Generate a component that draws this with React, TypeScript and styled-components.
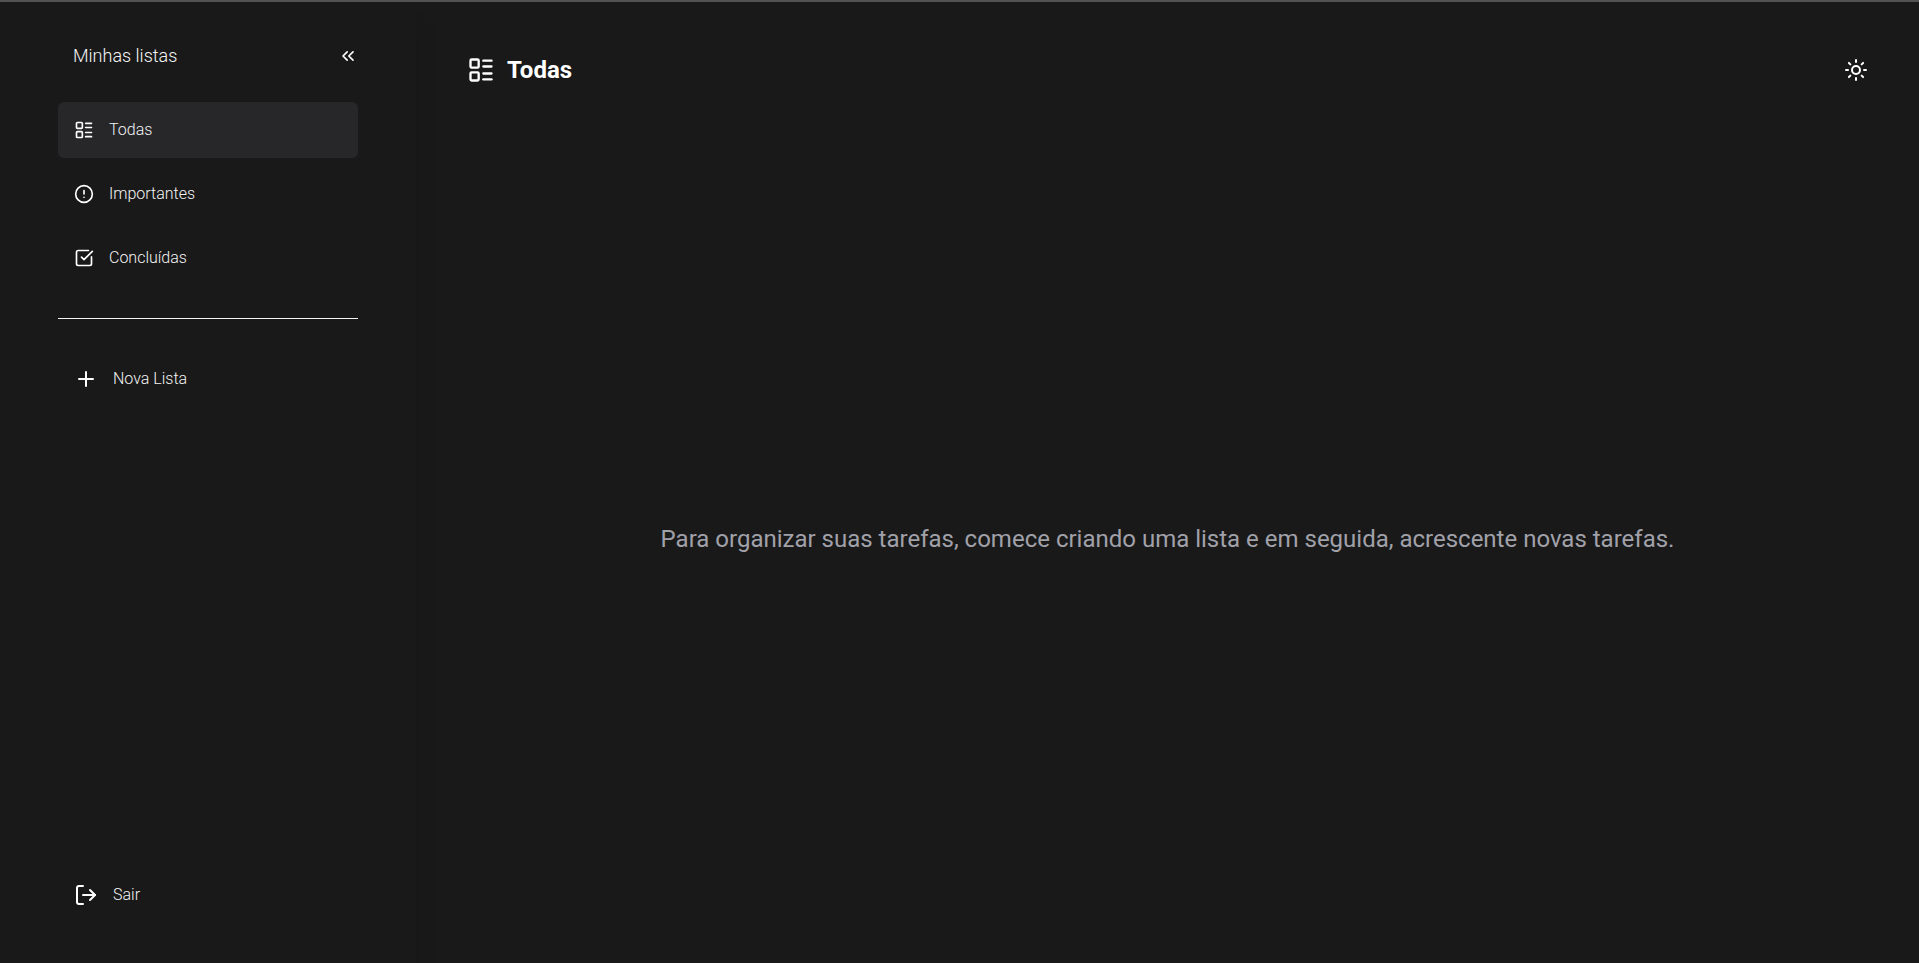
import React, { useState } from "react";
import styled, { createGlobalStyle } from "styled-components";
import {
  ChevronsLeft,
  CircleAlert,
  LayoutList,
  LogOut,
  Plus,
  SquareCheckBig,
  Sun,
} from "lucide-react";

const GlobalStyle = createGlobalStyle`
  *, *::before, *::after { box-sizing: border-box; }
  body {
    margin: 0;
    background: #191919;
    color: #ffffff;
    font-family: Roboto, "Liberation Sans", sans-serif;
  }
  button {
    border: 0;
    padding: 0;
    background: none;
    color: inherit;
    font: inherit;
    cursor: pointer;
  }
`;

const Shell = styled.div`
  display: flex;
  min-height: 100vh;
  border-top: 2px solid #525252;
`;

const Sidebar = styled.aside`
  display: flex;
  flex-direction: column;
  flex: 0 0 416px;
  padding: 36px 58px 40px;
  box-shadow: 4px 24px 20px rgba(0, 0, 0, 0.08);
`;

const SidebarHeader = styled.div`
  display: flex;
  align-items: center;
  justify-content: space-between;
  height: 36px;
  padding-left: 15px;
`;

const SidebarTitle = styled.h2`
  margin: 0;
  color: #f4f4f5;
  font-size: 18px;
  line-height: 24px;
  font-weight: 300;
`;

const IconButton = styled.button`
  display: flex;
`;

const Nav = styled.nav`
  display: flex;
  flex-direction: column;
  gap: 8px;
  margin-top: 28px;
`;

const ItemButton = styled.button<{ $active?: boolean }>`
  && {
    display: flex;
    align-items: center;
    gap: 15px;
    width: 100%;
    height: 56px;
    padding: 0 16px;
    border-radius: 6px;
    background: ${({ $active }) => ($active ? "#27272a" : "transparent")};
    color: #f4f4f5;
    font-size: 16px;
    line-height: 24px;
    font-weight: 300;
    text-align: left;
  }

  svg {
    color: #ffffff;
  }
`;

const Divider = styled.hr`
  width: 100%;
  height: 1px;
  margin: 32px 0;
  border: 0;
  background: #f4f4f5;
`;

const Spacer = styled.div`
  flex: 1;
`;

const Main = styled.main`
  display: flex;
  flex-direction: column;
  flex: 1;
  min-width: 0;
  padding: 52px 51px 0;
`;

const MainHeader = styled.header`
  display: flex;
  align-items: center;
  justify-content: space-between;
  height: 32px;
`;

const Title = styled.h1`
  display: flex;
  align-items: center;
  gap: 12px;
  margin: 0;
  font-size: 24px;
  line-height: 32px;
  font-weight: 700;
`;

const EmptyState = styled.div`
  display: flex;
  flex: 1;
  align-items: center;
  justify-content: center;
  padding-top: 28px;
`;

const EmptyText = styled.p`
  margin: 0;
  color: #a1a1aa;
  font-size: 24px;
  line-height: 32px;
  text-align: center;
`;

const lists = [
  { name: "Todas", Icon: LayoutList },
  { name: "Importantes", Icon: CircleAlert },
  { name: "Concluídas", Icon: SquareCheckBig },
];

export default function App() {
  const [current, setCurrent] = useState(0);
  const { name, Icon: CurrentIcon } = lists[current];

  return (
    <>
      <GlobalStyle />
      <Shell>
        <Sidebar>
          <SidebarHeader>
            <SidebarTitle>Minhas listas</SidebarTitle>
            <IconButton type="button" aria-label="Recolher menu">
              <ChevronsLeft size={20} />
            </IconButton>
          </SidebarHeader>
          <Nav>
            {lists.map(({ name: label, Icon }, index) => (
              <ItemButton
                key={label}
                type="button"
                $active={index === current}
                onClick={() => setCurrent(index)}
              >
                <Icon size={20} />
                {label}
              </ItemButton>
            ))}
          </Nav>
          <Divider />
          <ItemButton type="button">
            <Plus size={24} />
            Nova Lista
          </ItemButton>
          <Spacer />
          <ItemButton type="button">
            <LogOut size={24} />
            Sair
          </ItemButton>
        </Sidebar>
        <Main>
          <MainHeader>
            <Title>
              <CurrentIcon size={28} />
              {name}
            </Title>
            <IconButton type="button" aria-label="Alternar tema">
              <Sun size={24} />
            </IconButton>
          </MainHeader>
          <EmptyState>
            <EmptyText>
              Para organizar suas tarefas, comece criando uma lista e em seguida, acrescente novas tarefas.
            </EmptyText>
          </EmptyState>
        </Main>
      </Shell>
    </>
  );
}
